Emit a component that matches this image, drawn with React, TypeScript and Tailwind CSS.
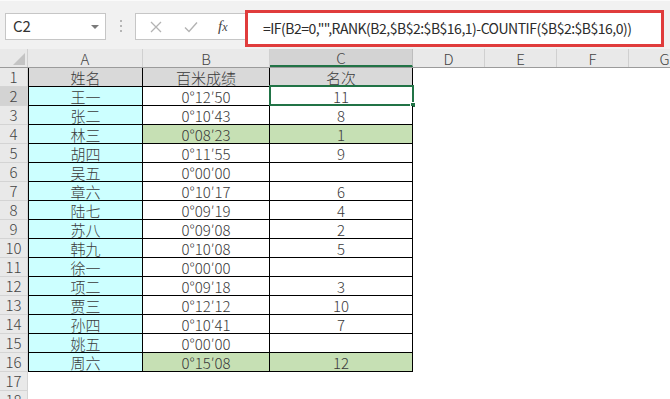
import React from "react";

const font = '"Noto Sans CJK SC", "Liberation Sans", sans-serif';

type Row = { n: number; name: string; time: string; rank: string; hl?: boolean };

const rows: Row[] = [
  { n: 2, name: "王一", time: "0°12′50", rank: "11" },
  { n: 3, name: "张二", time: "0°10′43", rank: "8" },
  { n: 4, name: "林三", time: "0°08′23", rank: "1", hl: true },
  { n: 5, name: "胡四", time: "0°11′55", rank: "9" },
  { n: 6, name: "吴五", time: "0°00′00", rank: "" },
  { n: 7, name: "章六", time: "0°10′17", rank: "6" },
  { n: 8, name: "陆七", time: "0°09′19", rank: "4" },
  { n: 9, name: "苏八", time: "0°09′08", rank: "2" },
  { n: 10, name: "韩九", time: "0°10′08", rank: "5" },
  { n: 11, name: "徐一", time: "0°00′00", rank: "" },
  { n: 12, name: "项二", time: "0°09′18", rank: "3" },
  { n: 13, name: "贾三", time: "0°12′12", rank: "10" },
  { n: 14, name: "孙四", time: "0°10′41", rank: "7" },
  { n: 15, name: "姚五", time: "0°00′00", rank: "" },
  { n: 16, name: "周六", time: "0°15′08", rank: "12", hl: true },
];

const RowHead: React.FC<{ n: number; active?: boolean }> = ({ n, active }) => (
  <div
    className={`w-[28px] h-full shrink-0 flex items-center justify-center border-r border-b border-[#d4d4d4] text-[15px] leading-[18px] text-[#444] ${
      active ? "bg-[#d3d3d3]" : "bg-[#e9e9e9]"
    }`}
  >
    {n}
  </div>
);

const FormulaBar: React.FC = () => (
  <div className="h-[49px] bg-[#f1f1f1] border-t border-[#fafafa] relative flex items-start">
    <div className="mt-[12px] ml-[5px] w-[101px] h-[27px] bg-white border border-[#c6c6c6] flex items-center justify-between pl-[7px] pr-[6px] text-[15px] text-[#333]">
      <span>C2</span>
      <span className="w-0 h-0 border-l-[4px] border-r-[4px] border-t-[4px] border-l-transparent border-r-transparent border-t-[#7a7a7a]" />
    </div>
    <div className="mt-[19px] ml-[14px] flex flex-col gap-[3px]">
      <span className="w-[2px] h-[2px] bg-[#b5b5b5]" />
      <span className="w-[2px] h-[2px] bg-[#b5b5b5]" />
      <span className="w-[2px] h-[2px] bg-[#b5b5b5]" />
    </div>
    <div className="mt-[12px] ml-[13px] w-[112px] h-[27px] bg-white border border-[#c6c6c6] flex items-center">
      <svg width="12" height="12" viewBox="0 0 12 12" className="ml-[14px]">
        <path d="M1 1 L11 11 M11 1 L1 11" stroke="#b3b3b3" strokeWidth="1.3" />
      </svg>
      <svg width="14" height="12" viewBox="0 0 14 12" className="ml-[22px]">
        <path d="M1 6.5 L5 10.5 L13 1.5" stroke="#b3b3b3" strokeWidth="1.4" fill="none" />
      </svg>
      <span
        className="ml-[20px] text-[15px] italic text-[#444]"
        style={{ fontFamily: '"Liberation Serif", serif' }}
      >
        f<span className="text-[12px]">x</span>
      </span>
    </div>
    <div className="absolute left-[245px] top-[9px] w-[419px] h-[37px] border-[3px] border-[#e03c3c] bg-white flex items-center pl-[15px] text-[14px] text-[#2b2b2b] tracking-[-0.5px]">
      =IF(B2=0,"",RANK(B2,$B$2:$B$16,1)-COUNTIF($B$2:$B$16,0))
    </div>
  </div>
);

const colHeads = [
  { l: "A", w: "w-[115px]" },
  { l: "B", w: "w-[127px]" },
  { l: "C", w: "w-[143px]", active: true },
  { l: "D", w: "w-[72px]" },
  { l: "E", w: "w-[72px]" },
  { l: "F", w: "w-[72px]" },
  { l: "G", w: "w-[72px]" },
];

export default function App() {
  return (
    <div
      className="w-[670px] h-[399px] overflow-hidden bg-white text-[#3a3a3a] text-[15px]"
      style={{ fontFamily: font }}
    >
      <FormulaBar />
      <div className="flex h-[19px] bg-[#e9e9e9] border-b border-[#9b9b9b] leading-none">
        <div className="w-[28px] shrink-0 border-r border-[#d0d0d0] flex items-end justify-end pr-[2px] pb-[2px]">
          <svg width="12" height="12" viewBox="0 0 12 12">
            <path d="M12 0 L12 12 L0 12 Z" fill="#c4c4c4" />
          </svg>
        </div>
        {colHeads.map((c) => (
          <div
            key={c.l}
            className={`${c.w} shrink-0 flex items-center justify-center text-[15px] font-light text-[#444] ${
              c.active
                ? "bg-[#d3d3d3] border-b-2 border-[#217346] border-r border-r-[#bdbdbd]"
                : "border-r border-[#d0d0d0]"
            }`}
          >
            {c.l}
          </div>
        ))}
      </div>

      <div className="flex h-[19px] leading-none font-light">
        <RowHead n={1} />
        <div className="w-[115px] shrink-0 bg-[#d9d9d9] border-l border-r border-b border-black flex items-center justify-center">
          姓名
        </div>
        <div className="w-[127px] shrink-0 bg-[#d9d9d9] border-r border-b border-black flex items-center justify-center">
          百米成绩
        </div>
        <div className="w-[143px] shrink-0 bg-[#d9d9d9] border-r border-b border-black flex items-center justify-center">
          名次
        </div>
      </div>

      {rows.map((r) => (
        <div key={r.n} className="flex h-[19px] leading-none font-light">
          <RowHead n={r.n} active={r.n === 2} />
          <div className="w-[115px] shrink-0 bg-[#ccffff] border-l border-r border-b border-black flex items-center justify-center">
            {r.name}
          </div>
          <div
            className={`w-[127px] shrink-0 border-r border-b border-black flex items-center justify-center ${
              r.hl ? "bg-[#c6e0b4]" : "bg-white"
            }`}
          >
            {r.time}
          </div>
          <div
            className={`w-[143px] shrink-0 border-r border-b border-black flex items-center justify-center relative ${
              r.hl ? "bg-[#c6e0b4]" : "bg-white"
            }`}
          >
            {r.rank}
            {r.n === 2 && (
              <>
                <span className="absolute -left-[1px] -top-[2px] -right-[2px] -bottom-[1px] border-2 border-[#217346]" />
                <span className="absolute -right-[4px] -bottom-[3px] w-[6px] h-[6px] bg-[#217346] border border-white" />
              </>
            )}
          </div>
        </div>
      ))}

      {[17, 18].map((n) => (
        <div key={n} className="flex h-[19px] leading-none font-light">
          <RowHead n={n} />
        </div>
      ))}
    </div>
  );
}
